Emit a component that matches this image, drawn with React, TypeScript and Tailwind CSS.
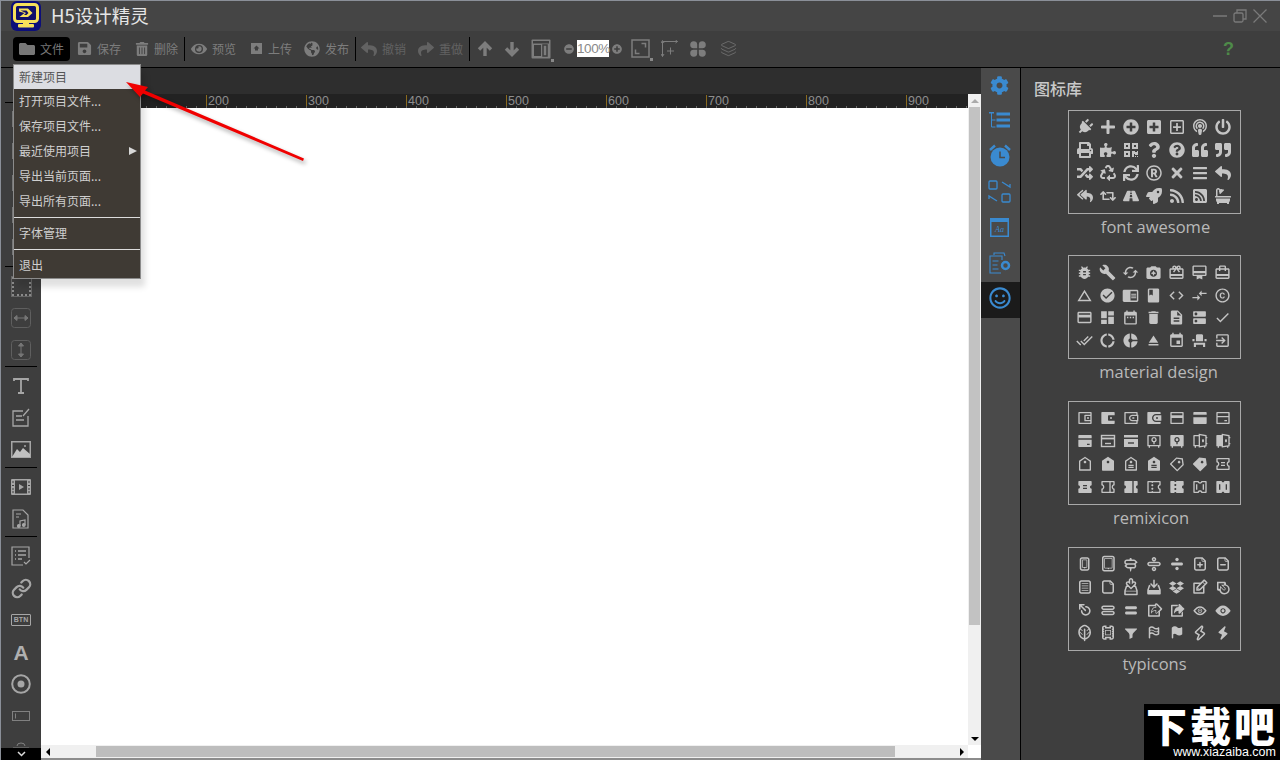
import React from "react";
import {
  FaPlug, FaPlus, FaPlusCircle, FaPlusSquare, FaRegPlusSquare, FaPodcast, FaPowerOff,
  FaPrint, FaPuzzlePiece, FaQrcode, FaQuestion, FaQuestionCircle, FaQuoteLeft, FaQuoteRight,
  FaRandom, FaRecycle, FaSync, FaRegRegistered, FaTimes, FaBars, FaReply,
  FaReplyAll, FaRetweet, FaRoad, FaRocket, FaRss, FaRssSquare, FaBath, FaDropbox,
  FaFolder, FaSave, FaTrashAlt, FaEye, FaGlobeAmericas, FaShare, FaMinusCircle, FaCog, FaRegSmile,
} from "react-icons/fa";
import {
  MdBugReport, MdBuild, MdCached, MdCameraEnhance, MdCardGiftcard, MdCardMembership, MdCardTravel,
  MdChangeHistory, MdCheckCircle, MdChromeReaderMode, MdClass, MdCode, MdCompareArrows, MdCopyright,
  MdCreditCard, MdDashboard, MdDateRange, MdDelete, MdDescription, MdDns, MdDone,
  MdDoneAll, MdDonutLarge, MdDonutSmall, MdEject, MdEvent, MdEventSeat, MdExitToApp,
} from "react-icons/md";
import {
  RiWallet2Line, RiWallet2Fill, RiWallet3Line, RiWallet3Fill, RiBankCard2Line, RiBankCard2Fill, RiBankCardLine,
  RiBankCardFill, RiSafeLine, RiSafeFill, RiSafe2Line, RiSafe2Fill,
  RiPriceTagLine, RiPriceTagFill, RiPriceTag2Line, RiPriceTag2Fill, RiPriceTag3Line, RiPriceTag3Fill,
  RiCouponLine, RiCouponFill, RiCoupon2Line, RiCoupon2Fill, RiCoupon3Line, RiCoupon3Fill, RiCoupon4Line, RiCoupon4Fill,
} from "react-icons/ri";
import {
  TiDevicePhone, TiDeviceTablet, TiDirections, TiDivideOutline, TiDivide, TiDocumentAdd, TiDocumentDelete,
  TiDocumentText, TiDocument, TiDownloadOutline, TiDownload, TiEdit, TiEjectOutline,
  TiEject, TiEqualsOutline, TiEquals, TiExportOutline, TiExport, TiEyeOutline, TiEye,
  TiFeather, TiFilm, TiFilter, TiFlagOutline, TiFlag, TiFlashOutline, TiFlash,
} from "react-icons/ti";
import { Layers, Link as LinkIcon } from "lucide-react";

type Ic = React.ComponentType<{ className?: string; size?: number }>;

const PayLine: Ic = ({ size }) => (
  <svg width={size} height={size} viewBox="0 0 16 16" fill="none" stroke="currentColor" strokeWidth="1.400">
    <rect x="1.500" y="2.500" width="13" height="11" />
    <path d="M1.500 5.500h13" strokeWidth="1.800" />
    <path d="M5 10.500h6" />
  </svg>
);
const PayFill: Ic = ({ size }) => (
  <svg width={size} height={size} viewBox="0 0 16 16">
    <rect x="1" y="2" width="14" height="2.500" fill="currentColor" />
    <rect x="1" y="6" width="14" height="8" fill="currentColor" />
    <path d="M5 10h6" stroke="#3e3e3e" strokeWidth="1.400" />
  </svg>
);
const PlugTilted: Ic = ({ size }) => <FaPlug size={size} className="rotate-45" />;

const sets: { name: string; offset: string; icons: Ic[]; size: number }[] = [
  { name: "font awesome", offset: "ml-[2px]", size: 16, icons: [
    PlugTilted, FaPlus, FaPlusCircle, FaPlusSquare, FaRegPlusSquare, FaPodcast, FaPowerOff,
    FaPrint, FaPuzzlePiece, FaQrcode, FaQuestion, FaQuestionCircle, FaQuoteLeft, FaQuoteRight,
    FaRandom, FaRecycle, FaSync, FaRegRegistered, FaTimes, FaBars, FaReply,
    FaReplyAll, FaRetweet, FaRoad, FaRocket, FaRss, FaRssSquare, FaBath] },
  { name: "material design", offset: "ml-[8px]", size: 17, icons: [
    MdBugReport, MdBuild, MdCached, MdCameraEnhance, MdCardGiftcard, MdCardMembership, MdCardTravel,
    MdChangeHistory, MdCheckCircle, MdChromeReaderMode, MdClass, MdCode, MdCompareArrows, MdCopyright,
    MdCreditCard, MdDashboard, MdDateRange, MdDelete, MdDescription, MdDns, MdDone,
    MdDoneAll, MdDonutLarge, MdDonutSmall, MdEject, MdEvent, MdEventSeat, MdExitToApp] },
  { name: "remixicon", offset: "ml-[-7px]", size: 16, icons: [
    RiWallet2Line, RiWallet2Fill, RiWallet3Line, RiWallet3Fill, RiBankCard2Line, RiBankCard2Fill, RiBankCardLine,
    RiBankCardFill, PayLine, PayFill, RiSafeLine, RiSafeFill, RiSafe2Line, RiSafe2Fill,
    RiPriceTagLine, RiPriceTagFill, RiPriceTag2Line, RiPriceTag2Fill, RiPriceTag3Line, RiPriceTag3Fill, RiCouponLine,
    RiCouponFill, RiCoupon2Line, RiCoupon2Fill, RiCoupon3Line, RiCoupon3Fill, RiCoupon4Line, RiCoupon4Fill] },
  { name: "typicons", offset: "ml-[0px]", size: 18, icons: [
    TiDevicePhone, TiDeviceTablet, TiDirections, TiDivideOutline, TiDivide, TiDocumentAdd, TiDocumentDelete,
    TiDocumentText, TiDocument, TiDownloadOutline, TiDownload, ({ size }) => <FaDropbox size={(size ?? 18) - 3} />, TiEdit, TiEjectOutline,
    TiEject, TiEqualsOutline, TiEquals, TiExportOutline, TiExport, TiEyeOutline, TiEye,
    TiFeather, TiFilm, TiFilter, TiFlagOutline, TiFlag, TiFlashOutline, TiFlash] },
];

const cjk = "font-['Noto_Sans_CJK_SC','Liberation_Sans',sans-serif]";

function Logo() {
  return (
    <svg width="30" height="30" viewBox="0 0 30 30" className="block">
      <rect width="30" height="30" rx="6" fill="#0c0e7a" />
      <rect x="3.500" y="3.500" width="23" height="17" rx="3" fill="#10106a" stroke="#f6e05a" strokeWidth="3" />
      <path d="M8 7.500h9l4.500 4.500L17 16H8.500l5-4-5.500-1.500z" fill="#f6e05a" />
      <path d="M9.500 9.500h6l2 2.500-2 2h-2.500l2-2z" fill="#10106a" />
      <rect x="12" y="20" width="6" height="4" fill="#f6e05a" />
      <rect x="7" y="23" width="16" height="3.500" rx="1" fill="#f6e05a" />
    </svg>
  );
}

function Tool({ icon, label, ml, dim }: { icon: React.ReactNode; label: string; ml: string; dim?: boolean }) {
  return (
    <div className={`flex items-center gap-[5px] ${ml} ${dim ? "text-[#626262]" : "text-[#7d7d7d]"}`}>
      {icon}
      <span className="text-[12px] leading-none whitespace-nowrap">{label}</span>
    </div>
  );
}

const Sep = ({ ml }: { ml: string }) => <div className={`w-px h-[24px] bg-black ${ml}`} />;

function Toolbar() {
  return (
    <div className={`h-[37px] pb-px bg-[#3e3e3e] flex items-center shrink-0 border-b border-black ${cjk}`}>
      <div className="ml-[12px] w-[57px] h-[24px] bg-black rounded-[4px] flex items-center pl-[6px] gap-[5px] text-[#777]">
        <FaFolder size={16} />
        <span className="text-[12px] leading-none">文件</span>
      </div>
      <Tool ml="ml-[7px]" icon={<FaSave size={15} />} label="保存" />
      <Tool ml="ml-[14px]" icon={<FaTrashAlt size={14} />} label="删除" />
      <Sep ml="ml-[6px]" />
      <Tool ml="ml-[6px]" icon={<FaEye size={16} />} label="预览" />
      <Tool ml="ml-[14px]" icon={
        <svg width="13" height="13" viewBox="0 0 13 13"><path d="M1 1h11v11H1z" fill="#7d7d7d" /><path d="M6.500 3.500l3 3H8v2H5v-2H3.500z" fill="#3e3e3e" /></svg>
      } label="上传" />
      <Tool ml="ml-[12px]" icon={<FaGlobeAmericas size={16} />} label="发布" />
      <Sep ml="ml-[6px]" />
      <Tool ml="ml-[5px]" dim icon={<FaReply size={16} />} label="撤销" />
      <Tool ml="ml-[12px]" dim icon={<FaShare size={16} />} label="重做" />
      <Sep ml="ml-[6px]" />
      <svg width="16" height="16" viewBox="0 0 16 16" className="ml-[7px]" fill="none" stroke="#7d7d7d" strokeWidth="3.400"><path d="M8 15V3M2 8.500l6-6 6 6" /></svg>
      <svg width="16" height="16" viewBox="0 0 16 16" className="ml-[11px]" fill="none" stroke="#7d7d7d" strokeWidth="3.400"><path d="M8 1v12M2 7.500l6 6 6-6" /></svg>
      <div className="relative ml-[11px]">
        <svg width="20" height="20" viewBox="0 0 20 20" className="block">
          <rect x="0.500" y="0.500" width="19" height="19" rx="1" fill="#7d7d7d" />
          <rect x="2" y="2" width="16" height="2.500" fill="#3e3e3e" />
          <rect x="3" y="6" width="7" height="11" fill="#3e3e3e" />
          <rect x="12" y="6" width="4" height="11" fill="none" stroke="#3e3e3e" strokeWidth="1.500" />
        </svg>
        <div className="absolute right-[-3px] bottom-[-3px] w-[3px] h-[3px] bg-[#888]" />
      </div>
      <FaMinusCircle size={10} className="ml-[13px] text-[#7d7d7d]" />
      <div className="ml-[3px] w-[32px] h-[17px] bg-white text-[#8a8a8a] text-[13.500px] leading-[17px] text-center font-['Liberation_Sans',sans-serif] tracking-[-0.500px]">100%</div>
      <FaPlusCircle size={10} className="ml-[3px] text-[#7d7d7d]" />
      <div className="relative ml-[9px]">
        <svg width="19" height="19" viewBox="0 0 19 19" className="block">
          <rect x="1" y="1" width="17" height="17" fill="none" stroke="#7d7d7d" strokeWidth="1.500" />
          <path d="M10.500 4.500h4v4M4.500 10.500v4h4" fill="none" stroke="#7d7d7d" strokeWidth="1.500" />
        </svg>
        <div className="absolute right-[-3px] bottom-[-3px] w-[3px] h-[3px] bg-[#888]" />
      </div>
      <svg width="17" height="17" viewBox="0 0 17 17" className="ml-[11px] text-[#7d7d7d]" fill="none" stroke="currentColor">
        <path d="M1.500 1.500v15M0 14l1.500 2.500L3 14M0 3l1.500-2.500L3 3M1.500 1.500h15M14.500 0l2 1.500-2 1.500M6 11h7M9.500 7.500v7" />
      </svg>
      <svg width="16" height="16" viewBox="0 0 16 16" className="ml-[12px]" fill="#7d7d7d">
        <path d="M7.200 7.200H3.500A3.500 3.500 0 1 1 7.200 3.500zM8.800 7.200V3.500a3.500 3.500 0 1 1 3.700 3.700zM7.200 8.800v3.700A3.500 3.500 0 1 1 3.500 8.800zM8.800 8.800h3.700a3.500 3.500 0 1 1-3.700 3.700z" />
      </svg>
      <Layers size={17} strokeWidth={1} className="ml-[14px] text-[#7d7d7d]" />
      <span className="ml-auto mr-[46px] text-[#4e8a49] text-[18px] leading-none font-bold font-['Liberation_Sans',sans-serif]">?</span>
    </div>
  );
}

const Item = ({ children }: { children?: React.ReactNode }) => (
  <div className="h-[32px] w-full flex items-center justify-center shrink-0 text-[#a6a6a6]">{children}</div>
);
const SideSep = ({ cls }: { cls: string }) => <div className={`h-px w-[32px] bg-black shrink-0 ${cls}`} />;

function Sidebar() {
  return (
    <div className="relative w-[40px] shrink-0 bg-[#3e3e3e] flex flex-col items-center overflow-hidden pt-[34px]">
      <SideSep cls="mb-0" />
      {[0, 1, 2, 3, 4].map((i) => <Item key={i}><div className="w-[18px] h-[16px] border border-[#777]" /></Item>)}
      <SideSep cls="mt-[3px] mb-[3px]" />
      <Item><div className="w-[19px] h-[19px] border-2 border-dotted border-[#8a8a8a] outline outline-1 outline-[#666]" /></Item>
      <Item>
        <svg width="20" height="20" viewBox="0 0 20 20" fill="none" stroke="#5f5f5f"><rect x="0.500" y="0.500" width="19" height="19" rx="3" /><path d="M3 10h14M3 10l3-2.500v5zM17 10l-3-2.500v5z" fill="#777" stroke="#777" /></svg>
      </Item>
      <Item>
        <svg width="20" height="20" viewBox="0 0 20 20" fill="none" stroke="#5f5f5f"><rect x="0.500" y="0.500" width="19" height="19" rx="3" /><path d="M10 3v14M10 3L7.500 6h5zM10 17l-2.500-3h5z" fill="#777" stroke="#777" /></svg>
      </Item>
      <SideSep cls="mb-[3px]" />
      <Item>
        <svg width="16" height="16" viewBox="0 0 16 16" fill="none" stroke="#a6a6a6" strokeWidth="1.800"><path d="M1 3V1h14v2M8 1v14M5 15h6" /></svg>
      </Item>
      <Item>
        <svg width="20" height="20" viewBox="0 0 20 20" fill="none" stroke="#a6a6a6" strokeWidth="1.300"><path d="M12 3H2v15h15V8" /><path d="M5 8h6M5 12h8M12 8l6-7" /></svg>
      </Item>
      <Item>
        <svg width="20" height="18" viewBox="0 0 20 18"><rect width="20" height="17" fill="#a6a6a6" /><rect x="1.500" y="1.500" width="17" height="14" fill="#3e3e3e" /><path d="M1 16l5-8 3 3 3-4 7 6v3z" fill="#c0c0c0" /><circle cx="14" cy="5" r="1" fill="#a6a6a6" /></svg>
      </Item>
      <SideSep cls="mt-px mb-[3px]" />
      <Item>
        <svg width="20" height="16" viewBox="0 0 20 16"><rect width="20" height="16" rx="1" fill="#a6a6a6" /><rect x="4" y="1.500" width="12" height="13" fill="#3e3e3e" /><path d="M8 5l5 3-5 3z" fill="#a6a6a6" /><path d="M1 3h2M1 6.500h2M1 10h2M1 13h2M17 3h2M17 6.500h2M17 10h2M17 13h2" stroke="#3e3e3e" /></svg>
      </Item>
      <Item>
        <svg width="18" height="20" viewBox="0 0 18 20" fill="none" stroke="#a6a6a6" strokeWidth="1.200"><path d="M1 3V1h10l5 5v13H1zM4 5h5M4 8h3" /><path d="M8 17V12l5-1v5" /><circle cx="6.800" cy="17" r="1.300" fill="#a6a6a6" /><circle cx="11.800" cy="16" r="1.300" fill="#a6a6a6" /></svg>
      </Item>
      <SideSep cls="mt-px mb-[3px]" />
      <Item>
        <svg width="20" height="20" viewBox="0 0 20 20" fill="none" stroke="#a6a6a6" strokeWidth="1.200"><path d="M12 19H1V1h17v11" /><path d="M4 5h1M7 5h8M4 9h1M7 9h8M4 13h1M7 13h4" strokeWidth="1.500" /><path d="M13 16l2 2 4-4" /></svg>
      </Item>
      <Item><LinkIcon size={21} strokeWidth={2.6} /></Item>
      <Item>
        <div className="w-[20px] h-[12px] border border-[#a6a6a6] rounded-[1px] text-[7px] leading-[10px] text-center font-bold font-['Liberation_Sans',sans-serif]">BTN</div>
      </Item>
      <Item><span className="text-[#b0b0b0] text-[21px] leading-none font-bold font-['Liberation_Sans',sans-serif]">A</span></Item>
      <Item>
        <svg width="20" height="20" viewBox="0 0 20 20"><circle cx="10" cy="10" r="8.800" fill="none" stroke="#a6a6a6" strokeWidth="2" /><circle cx="10" cy="10" r="3.500" fill="#a6a6a6" /></svg>
      </Item>
      <Item>
        <svg width="18" height="10" viewBox="0 0 18 10" fill="none" stroke="#808080"><rect x="0.500" y="0.500" width="17" height="9" /><path d="M3.500 2.500v5" /></svg>
      </Item>
      <Item>
        <svg width="18" height="12" viewBox="0 0 18 12" fill="none" stroke="#808080"><path d="M5 4a4 3 0 0 1 8 0M1 6h16" /></svg>
      </Item>
      <div className="absolute left-0 right-0 bottom-0 h-[12px] bg-black flex items-center justify-center">
        <svg width="9" height="6" viewBox="0 0 9 6" fill="none" stroke="#ddd" strokeWidth="1.500"><path d="M1 1l3.500 3.500L8 1" /></svg>
      </div>
    </div>
  );
}

const marks = [100, 200, 300, 400, 500, 600, 700, 800, 900];

function Ruler() {
  return (
    <div className="relative h-[14px] bg-[#222222] flex pl-[65px] overflow-hidden shrink-0">
      {marks.map((m) => (
        <div key={m} className="w-[100px] shrink-0 border-l border-[#8a6a1e] h-[13px] mt-[1px] pl-[1px] text-[12.500px] leading-[12px] text-[#8e8e8e] font-['Liberation_Sans',sans-serif]">{m}</div>
      ))}
      <div className="absolute left-[5px] right-0 bottom-0 h-[2px] bg-[repeating-linear-gradient(to_right,#666_0,#666_1px,transparent_1px,transparent_10px)]" />
    </div>
  );
}

function Canvas() {
  return (
    <div className="flex-1 min-w-0 flex flex-col">
      <div className="h-[26px] bg-[#2e2e2e] shrink-0" />
      <div className="flex-1 flex min-h-0">
        <div className="flex-1 min-w-0 flex flex-col">
          <Ruler />
          <div className="flex-1 bg-white" />
        </div>
        <div className="w-[13px] shrink-0 bg-[#f0f0f0] flex flex-col items-center">
          <div className="h-[13px] w-full bg-[#f0f0f0] flex items-center justify-center">
            <div className="w-0 h-0 border-l-[4px] border-r-[4px] border-b-[4px] border-l-transparent border-r-transparent border-b-[#aaa]" />
          </div>
          <div className="w-[11px] h-[518px] bg-[#c2c2c2]" />
          <div className="flex-1" />
          <div className="h-[13px] w-full flex items-center justify-center">
            <div className="w-0 h-0 border-l-[4px] border-r-[4px] border-t-[4px] border-l-transparent border-r-transparent border-t-black" />
          </div>
        </div>
      </div>
      <div className="h-[13px] shrink-0 bg-[#f0f0f0] flex items-center">
        <div className="w-[13px] flex justify-center">
          <div className="w-0 h-0 border-t-[4px] border-b-[4px] border-r-[4px] border-t-transparent border-b-transparent border-r-black" />
        </div>
        <div className="ml-[42px] w-[799px] h-[11px] bg-[#bdbdbd]" />
        <div className="flex-1" />
        <div className="w-[13px] flex justify-center">
          <div className="w-0 h-0 border-t-[4px] border-b-[4px] border-l-[4px] border-t-transparent border-b-transparent border-l-black" />
        </div>
        <div className="w-[13px] h-[13px] bg-white" />
      </div>
      <div className="h-[2px] bg-[#8c8c8c] shrink-0" />
    </div>
  );
}

function RightIcons() {
  const blue = "#3a8ad0";
  const dark = "#4a4a4a";
  const Slot = ({ children, h }: { children: React.ReactNode; h: string }) => (
    <div className={`${h} flex items-center justify-center shrink-0 pr-[2px]`}>{children}</div>
  );
  return (
    <div className="w-[39px] shrink-0 bg-[#4a4a4a] border-r border-black box-content flex flex-col text-[#3a8ad0]">
      <Slot h="h-[35px]"><FaCog size={19} /></Slot>
      <Slot h="h-[35px]">
        <svg width="21" height="17" viewBox="0 0 21 17" fill="none" stroke={blue}><path d="M2.500 1v14h4M2.500 8h4" /><path d="M0 .5h5" strokeWidth="2" /><rect x="8" y="1" width="12.500" height="2" fill={blue} /><rect x="8" y="7" width="12.500" height="2" fill={blue} /><rect x="8" y="13" width="12.500" height="2" fill={blue} /></svg>
      </Slot>
      <Slot h="h-[35px]">
        <svg width="22" height="23" viewBox="0 0 22 23">
          <circle cx="11" cy="13" r="9.500" fill={blue} />
          <path d="M1 6l5-4.500M21 6l-5-4.500" stroke={blue} strokeWidth="2.400" />
          <path d="M11 7.500v6h5" fill="none" stroke={dark} strokeWidth="1.500" />
        </svg>
      </Slot>
      <Slot h="h-[36px]">
        <svg width="23" height="23" viewBox="0 0 23 23" fill="none" stroke={blue} strokeWidth="1.300"><rect x="1" y="1" width="8" height="8" rx="1" /><rect x="14" y="14" width="8" height="8" rx="1" /><path d="M14 2l8 5V4M9 21L1 16v3" /></svg>
      </Slot>
      <Slot h="h-[36px]">
        <svg width="19" height="19" viewBox="0 0 19 19"><rect x="0.750" y="0.750" width="17.500" height="17.500" fill="none" stroke={blue} strokeWidth="1.500" /><rect x="1" y="1" width="17" height="3" fill={blue} /><text x="9.500" y="14" textAnchor="middle" fontSize="8" fontStyle="italic" fontFamily="Liberation Serif" fill={blue}>Aa</text></svg>
      </Slot>
      <Slot h="h-[36px]">
        <svg width="22" height="22" viewBox="0 0 22 22" fill="none" stroke={blue} strokeWidth="1.100"><path d="M5 3V1h10l1 3M12 21H1V4h12v4" /><path d="M3.500 9h6M3.500 13h5M3.500 17h6" /><circle cx="16.500" cy="13.500" r="3.500" strokeWidth="2.500" /></svg>
      </Slot>
      <div className="mt-px h-[36px] bg-[#1b1b1b] flex justify-center pt-[5px] pr-[2px] shrink-0"><FaRegSmile size={22} /></div>
    </div>
  );
}

function Library() {
  return (
    <div className={`w-[259px] shrink-0 bg-[#3e3e3e] ${cjk}`}>
      <div className="pl-[13px] pt-[9px] h-[42px] text-[16px] leading-[22px] font-medium text-[#c9c9c9]">图标库</div>
      <div className="pl-[47px] flex flex-col">
        {sets.map((s, n) => (
          <div key={s.name} className={`w-[173px] ${n === 0 ? "h-[145px]" : "h-[146px]"}`}>
            <div className="h-[104px] border border-[#a9a9a9] grid grid-cols-7 grid-rows-4 pl-[4px] pr-[6px] pt-[5px] pb-[6px]">
              {s.icons.map((Icon, i) => (
                <div key={i} className="flex items-center justify-center text-[#c4c4c4]">
                  <Icon size={s.size} />
                </div>
              ))}
            </div>
            <div className={`text-center text-[16.500px] leading-[26px] text-[#b9b9b9] font-['Open_Sans',sans-serif] ${s.offset}`}>{s.name}</div>
          </div>
        ))}
      </div>
    </div>
  );
}

const menu = ["打开项目文件...", "保存项目文件...", "最近使用项目", "导出当前页面...", "导出所有页面..."];

function FileMenu() {
  return (
    <div className={`absolute left-[12px] top-[63px] w-[128px] h-[215px] border border-[#8b8b8b] bg-[#3f3a34] text-[#cfcfcf] text-[12px] shadow-[4px_8px_6px_rgba(0,0,0,0.12)] ${cjk}`}>
      <div className="h-[24px] bg-[#dcdde2] text-[#555] pl-[5px] leading-[23px]">新建项目</div>
      {menu.map((m) => (
        <div key={m} className="h-[25px] pl-[5px] leading-[24px] relative whitespace-nowrap">
          {m}
          {m === "最近使用项目" && (
            <div className="absolute right-[3px] top-[8px] w-0 h-0 border-t-[4px] border-b-[4px] border-l-[8px] border-t-transparent border-b-transparent border-l-[#d8d8d8]" />
          )}
        </div>
      ))}
      <div className="h-px bg-[#ddd] mt-[3px]" />
      <div className="h-[31px] pl-[5px] leading-[30px]">字体管理</div>
      <div className="h-px bg-[#ddd]" />
      <div className="h-[31px] pl-[5px] leading-[30px]">退出</div>
    </div>
  );
}

function RedArrow() {
  return (
    <svg className="absolute left-[119px] top-[75px] drop-shadow-[2px_3px_2px_rgba(0,0,0,0.35)]" width="190" height="90" viewBox="120 76 190 90">
      <path d="M126 82L148 87L145 90.500L304 158.500L303 161L143 93.500L140 97Z" fill="#f00000" />
    </svg>
  );
}

function Watermark() {
  return (
    <div className="absolute right-0 bottom-0 w-[136px] h-[56px] bg-black overflow-hidden">
      <div className={`text-white text-center text-[41px] leading-[41px] font-black tracking-[3px] h-[41px] whitespace-nowrap ${cjk}`}>下载吧</div>
      <div className="mt-[1px] text-white text-right pr-[4px] text-[12.500px] leading-[13px] font-['Liberation_Sans',sans-serif]">www.xiazaiba.com</div>
    </div>
  );
}

export default function App() {
  return (
    <div className={`relative w-[1280px] h-[760px] overflow-hidden flex flex-col bg-[#3e3e3e] border-l border-t border-[#8a8f98] ${cjk}`}>
      <div className="h-[30px] bg-[#454545] flex items-center shrink-0">
        <div className="ml-[10px]"><Logo /></div>
        <div className="ml-[10px] pb-px text-[18.500px] leading-none text-[#e6e6e6]">H5设计精灵</div>
        <div className="ml-auto mr-[13px] flex items-center gap-[6px]">
          <svg width="14" height="14" viewBox="0 0 14 14" stroke="#7a7a7a" strokeWidth="1.500"><path d="M0 7h14" /></svg>
          <svg width="14" height="14" viewBox="0 0 14 14" fill="none" stroke="#7a7a7a" strokeWidth="1.300"><rect x="1" y="4" width="9" height="9" rx="1.500" /><path d="M4 4V1h9v9h-3" /></svg>
          <svg width="14" height="14" viewBox="0 0 14 14" stroke="#7a7a7a" strokeWidth="1.300"><path d="M0.500 0.500l13 13M13.500 0.500l-13 13" /></svg>
        </div>
      </div>
      <Toolbar />
      <div className="flex-1 flex min-h-0">
        <Sidebar />
        <Canvas />
        <RightIcons />
        <Library />
      </div>
      <FileMenu />
      <RedArrow />
      <Watermark />
    </div>
  );
}
